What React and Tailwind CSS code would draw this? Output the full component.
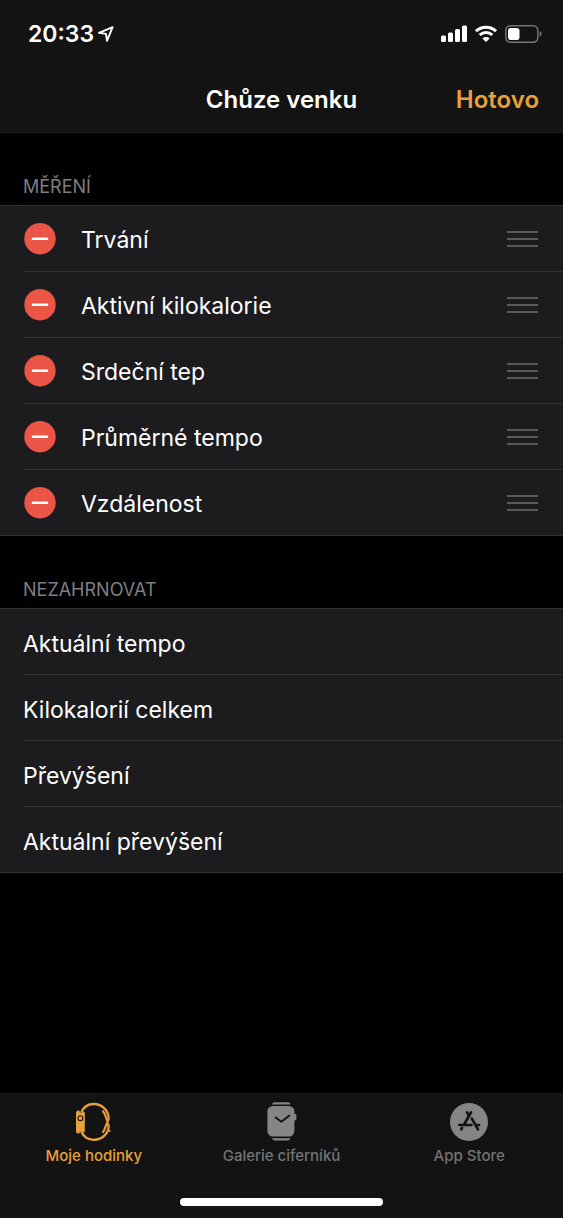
import React from "react";

const included = ["Trvání", "Aktivní kilokalorie", "Srdeční tep", "Průměrné tempo", "Vzdálenost"];
const excluded = ["Aktuální tempo", "Kilokalorií celkem", "Převýšení", "Aktuální převýšení"];

function StatusBar() {
  return (
    <div className="flex h-17 items-center justify-between pl-7 pr-[21px]">
      <div className="flex items-center gap-1">
        <time className="text-[23px] leading-7 font-semibold text-white">20:33</time>
        <svg width="16" height="16" viewBox="0 0 16 16" fill="none" stroke="white" strokeWidth="1.9" strokeLinejoin="round" aria-hidden="true">
          <path d="M14.6 1.2 L1 6.8 L8 7.9 L9 14.8 Z" />
        </svg>
      </div>
      <div className="flex items-center gap-2" aria-hidden="true">
        <svg width="26" height="18" viewBox="0 0 26 18" fill="white">
          <rect x="0" y="10.5" width="5" height="6.5" rx="1.5" />
          <rect x="7" y="7.5" width="5" height="9.5" rx="1.5" />
          <rect x="14" y="4" width="5" height="13" rx="1.5" />
          <rect x="21" y="0.5" width="5" height="16.5" rx="1.5" />
        </svg>
        <svg width="22" height="18" viewBox="0 0 22 18" fill="none" stroke="white" strokeWidth="3">
          <path d="M1 6.2 A14.4 14.4 0 0 1 21 6.2" />
          <path d="M4.7 10 A9.2 9.2 0 0 1 17.3 10" />
          <path d="M11 17 L7.4 13.4 A5.2 5.2 0 0 1 14.6 13.4 Z" fill="white" stroke="none" />
        </svg>
        <svg width="37" height="18" viewBox="0 0 37 18" fill="none">
          <rect x="0.8" y="0.8" width="32" height="16.4" rx="4.6" stroke="#747474" strokeWidth="1.5" />
          <rect x="3" y="3" width="11.5" height="12" rx="2.8" fill="white" />
          <path d="M34.6 6.2 Q36.6 7 36.6 9 Q36.6 11 34.6 11.8 Z" fill="#747474" />
        </svg>
      </div>
    </div>
  );
}

function Group({ title, children }) {
  return (
    <section>
      <h2 className="flex h-18 items-end px-[23px] pb-[6px] text-[18px] leading-6 text-[#7e7e83]">{title}</h2>
      <ul className="border-y border-[#303032] bg-[#1c1c1e]">{children}</ul>
    </section>
  );
}

function RemovableRow({ label, last }) {
  return (
    <li className="flex pl-[23px]">
      <div className={"flex flex-1 items-center pr-[25px] " + (last ? "h-[65px]" : "h-[66px] border-b border-[#303032]")}>
        <button type="button" aria-label={"Odebrat " + label}>
          <svg width="34" height="32" viewBox="0 0 34 32">
            <circle cx="17" cy="15.7" r="15.7" fill="#eb5545" />
            <path d="M10 15.7 H24" stroke="white" strokeWidth="2.6" strokeLinecap="round" />
          </svg>
        </button>
        <span className="flex-1 pt-0.5 pl-6 text-[23px] leading-8 text-white">{label}</span>
        <button type="button" aria-label={"Přesunout " + label}>
          <svg width="32" height="18" viewBox="0 0 32 18" stroke="#59595c" strokeWidth="2">
            <path d="M1 2 H32 M1 9 H32 M1 16 H32" />
          </svg>
        </button>
      </div>
    </li>
  );
}

function PlainRow({ label, last }) {
  return (
    <li className="flex pl-[23px]">
      <div className={"flex flex-1 items-center pr-6 pt-1 text-[23px] leading-8 text-white " + (last ? "h-[65px]" : "h-[66px] border-b border-[#303032]")}>
        {label}
      </div>
    </li>
  );
}

function WatchSideIcon() {
  return (
    <svg width="38" height="40" viewBox="0 0 38 40" fill="none" stroke="#e8a03c">
      <path d="M6.2 10.4 C8.6 5 13.4 2 18.8 2 C27.4 2 33.6 8.8 33.6 16.4 C33.6 18.6 32.2 19.2 32.2 20.4 C32.2 21.6 33.6 22 33.6 24 C33.6 31.4 27.4 37.8 18.8 37.8 C13.4 37.8 8.6 34.8 6.2 29.6" strokeWidth="2.3" />
      <path d="M27.4 8.6 C30.8 11.6 30.6 14.8 32 18.6 M32.8 20.6 C29.6 23.6 31 27.4 27.4 30.8" strokeWidth="2.1" />
      <circle cx="34.8" cy="29" r="0.9" fill="#e8a03c" stroke="none" />
      <path d="M3 8.4 H4.4 C4.4 11 7.6 11 8.6 9.2 Q9.8 9.8 9.8 11 V29 Q9.8 30.3 8.6 30.8 C7.6 29 4.4 29 4.4 31.6 H3 Q1 31.6 1 29 V11 Q1 8.4 3 8.4 Z" fill="#e8a03c" stroke="none" />
      <circle cx="5.4" cy="16.2" r="2.4" stroke="#131313" strokeWidth="1.1" />
    </svg>
  );
}

function WatchFaceIcon() {
  return (
    <svg width="38" height="40" viewBox="0 0 38 40" fill="#858585">
      <path d="M9.8 1 Q10.2 0.2 11 0.2 H25.4 Q26.2 0.2 26.6 1 L27.6 2.4 H8.8 Z" />
      <path d="M8.8 36.2 H27.6 L26.6 37.6 Q26.2 38.4 25.4 38.4 H11 Q10.2 38.4 9.8 37.6 Z" />
      <rect x="4.4" y="4" width="27" height="30.6" rx="5.5" />
      <path d="M31 12 H32 Q33.4 12 33.4 13.4 V17 Q33.4 18.4 32 18.4 H31 Z" />
      <path d="M12.6 15.6 L18.4 19.8 L26.4 13.6" fill="none" stroke="#131313" strokeWidth="1.9" strokeLinecap="round" strokeLinejoin="round" />
    </svg>
  );
}

function StoreIcon() {
  return (
    <svg width="38" height="40" viewBox="0 0 38 40">
      <circle cx="19" cy="20" r="19" fill="#858585" />
      <g stroke="#131313" strokeWidth="2.7" fill="none" strokeLinecap="round">
        <path d="M21 10.4 L14.4 22" />
        <path d="M12 26 L11.2 27.4" />
        <path d="M17 10.4 L19 13.8" />
        <path d="M21.8 16.6 L28 27.4" />
        <path d="M9.4 23 H21.4" />
        <path d="M26 23 H29" />
      </g>
    </svg>
  );
}

function Tab({ icon, label, active }) {
  return (
    <a
      href="#"
      aria-current={active ? "page" : undefined}
      className={"flex flex-1 flex-col items-center gap-1 text-[15px] leading-5 font-medium " + (active ? "text-[#e8a03c]" : "text-[#747474]")}
    >
      {icon}
      {label}
    </a>
  );
}

export default function App() {
  return (
    <div className="flex min-h-screen flex-col bg-black font-['Inter','Noto_Sans',sans-serif]">
      <header className="border-b border-[#1c1c1c] bg-[#131313]">
        <StatusBar />
        <div className="grid h-16 grid-cols-[1fr_auto_1fr] items-center px-6">
          <h1 className="col-start-2 text-[24px] leading-8 font-semibold text-white">Chůze venku</h1>
          <button type="button" className="justify-self-end text-[24px] leading-8 font-semibold text-[#e8a03c]">Hotovo</button>
        </div>
      </header>

      <main className="flex-1">
        <Group title="MĚŘENÍ">
          {included.map((label, i) => (
            <RemovableRow key={label} label={label} last={i === included.length - 1} />
          ))}
        </Group>
        <Group title="NEZAHRNOVAT">
          {excluded.map((label, i) => (
            <PlainRow key={label} label={label} last={i === excluded.length - 1} />
          ))}
        </Group>
      </main>

      <footer className="border-t border-[#1c1c1c] bg-[#131313] pt-2">
        <nav className="flex">
          <Tab icon={<WatchSideIcon />} label="Moje hodinky" active />
          <Tab icon={<WatchFaceIcon />} label="Galerie ciferníků" />
          <Tab icon={<StoreIcon />} label="App Store" />
        </nav>
        <div className="flex justify-center pt-8 pb-3">
          <div className="h-2 w-[36%] rounded-full bg-white" />
        </div>
      </footer>
    </div>
  );
}
